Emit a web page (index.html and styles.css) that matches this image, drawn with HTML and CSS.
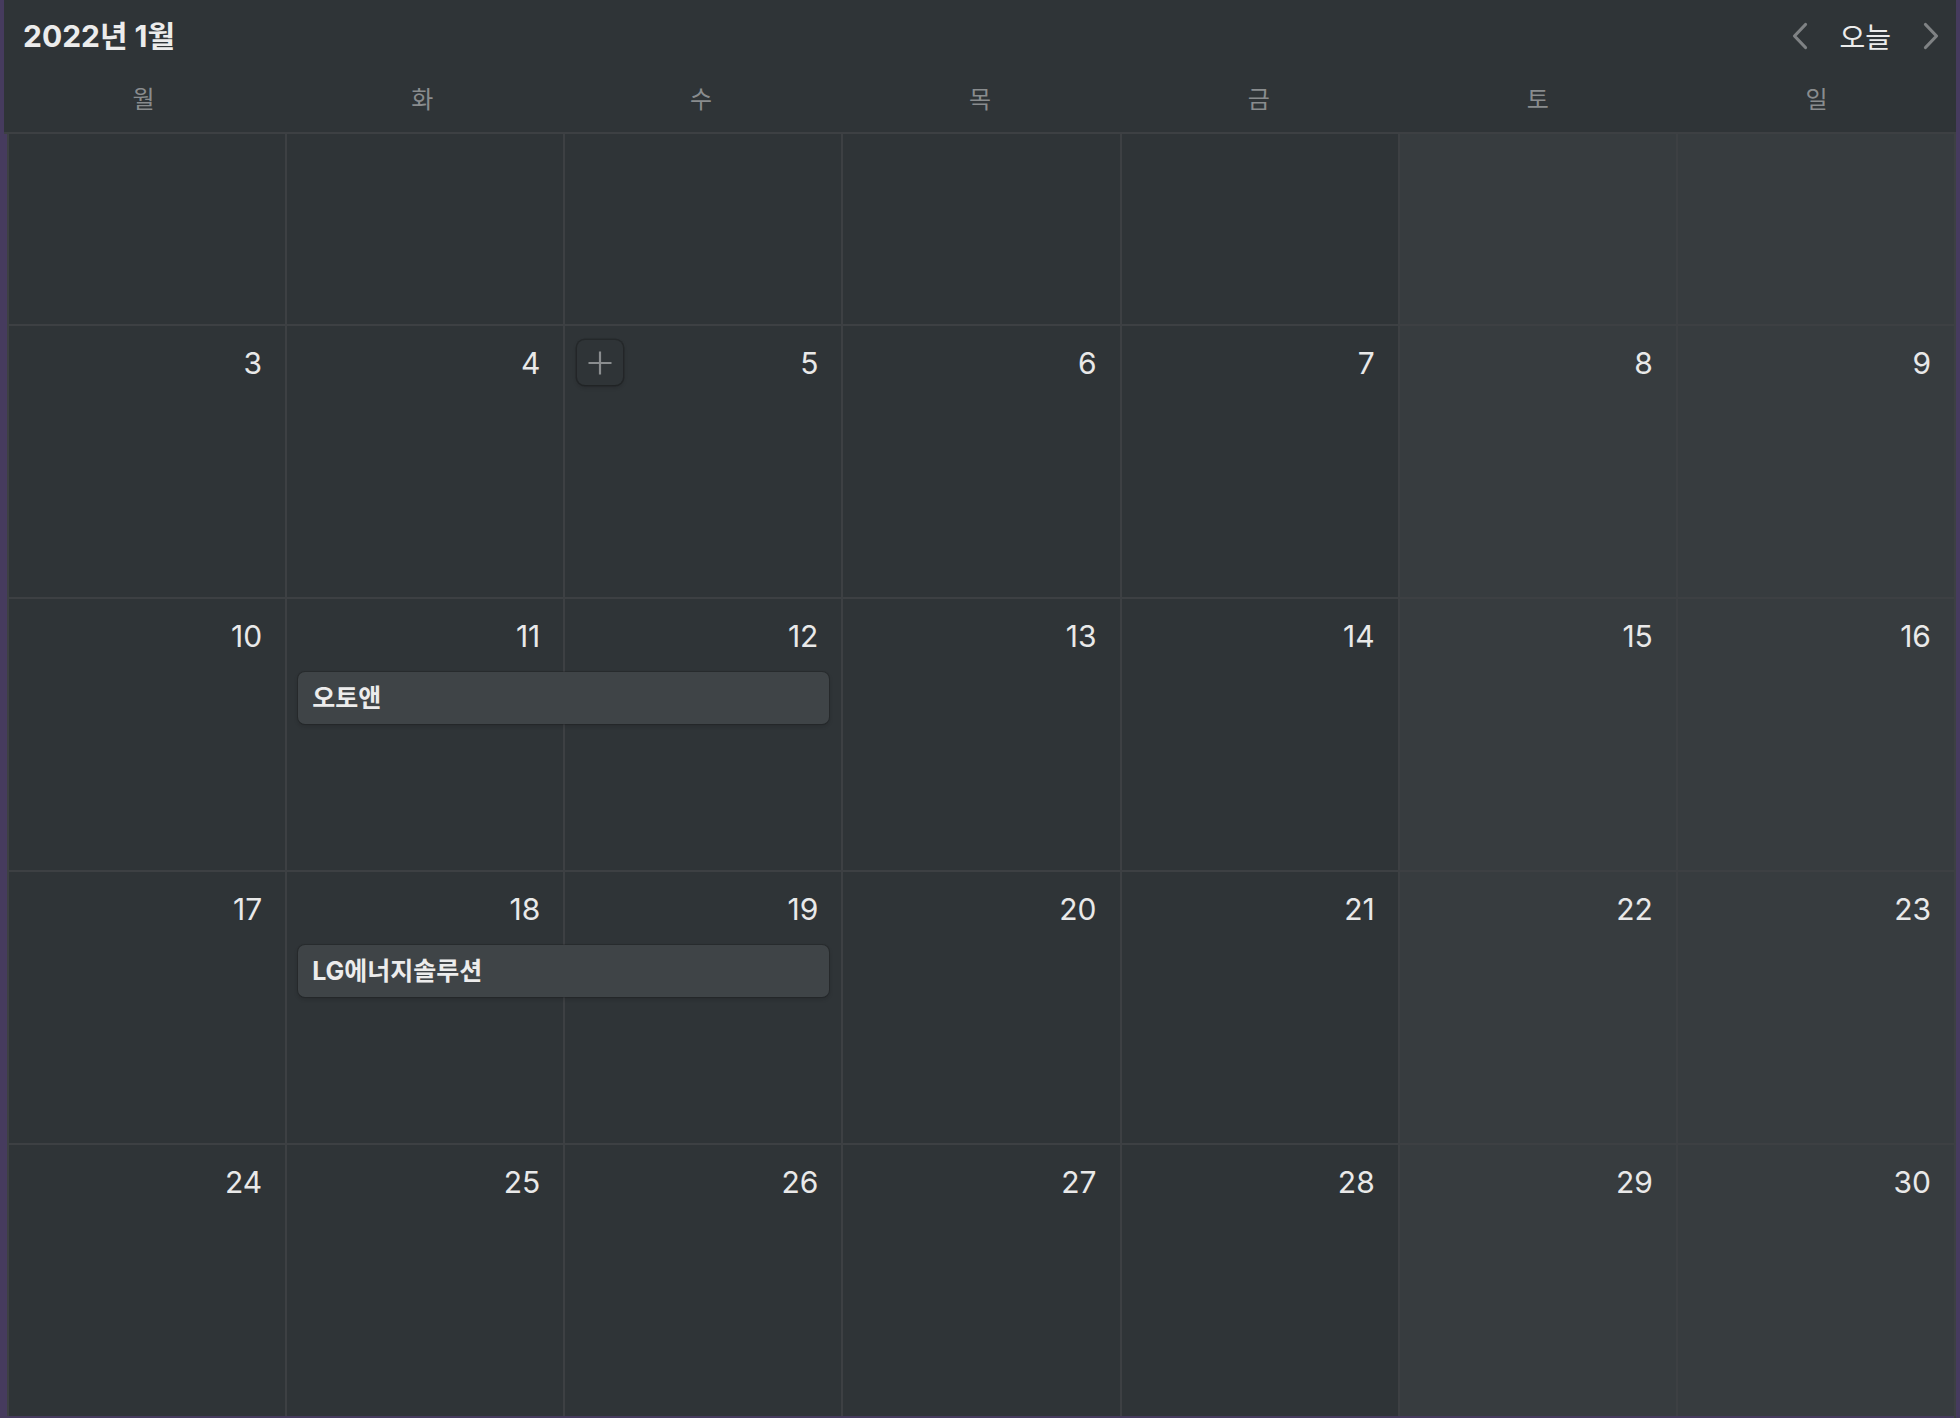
FILE: index.html
```html
<!DOCTYPE html>
<html lang="ko">
<head>
<meta charset="utf-8">
<title>2022년 1월</title>
<link rel="stylesheet" href="styles.css">
</head>
<body>
<div class="app">
  <header class="header">
    <div class="topbar">
      <h1 class="title">2022년 1월</h1>
      <nav class="nav">
        <button class="arrow" aria-label="이전">
          <svg width="16" height="28" viewBox="0 0 16 28"><polyline points="13.5,2.5 2.5,14 13.5,25.5" fill="none" stroke="currentColor" stroke-width="3.2" stroke-linecap="round" stroke-linejoin="round"/></svg>
        </button>
        <span class="today">오늘</span>
        <button class="arrow" aria-label="다음">
          <svg width="16" height="28" viewBox="0 0 16 28"><polyline points="2.5,2.5 13.5,14 2.5,25.5" fill="none" stroke="currentColor" stroke-width="3.2" stroke-linecap="round" stroke-linejoin="round"/></svg>
        </button>
      </nav>
    </div>
    <div class="weekdays">
      <div class="wd">월</div><div class="wd">화</div><div class="wd">수</div><div class="wd">목</div><div class="wd">금</div><div class="wd">토</div><div class="wd">일</div>
    </div>
  </header>

  <main class="month">
    <div class="week week-first">
      <div class="cell"></div><div class="cell"></div><div class="cell"></div><div class="cell"></div><div class="cell"></div><div class="cell"></div><div class="cell"></div>
    </div>
    <div class="week">
      <div class="cell"><span class="num">3</span></div>
      <div class="cell"><span class="num">4</span></div>
      <div class="cell"><button class="add" aria-label="추가"><svg width="26" height="26" viewBox="0 0 26 26"><path d="M13 1.5v23M1.5 13h23" stroke="currentColor" stroke-width="2.2" fill="none"/></svg></button><span class="num">5</span></div>
      <div class="cell"><span class="num">6</span></div>
      <div class="cell"><span class="num">7</span></div>
      <div class="cell"><span class="num">8</span></div>
      <div class="cell"><span class="num">9</span></div>
    </div>
    <div class="week">
      <div class="cell"><span class="num">10</span></div>
      <div class="cell"><span class="num">11</span></div>
      <div class="cell"><span class="num">12</span></div>
      <div class="cell"><span class="num">13</span></div>
      <div class="cell"><span class="num">14</span></div>
      <div class="cell"><span class="num">15</span></div>
      <div class="cell"><span class="num">16</span></div>
      <div class="event span-2-3">오토앤</div>
    </div>
    <div class="week">
      <div class="cell"><span class="num">17</span></div>
      <div class="cell"><span class="num">18</span></div>
      <div class="cell"><span class="num">19</span></div>
      <div class="cell"><span class="num">20</span></div>
      <div class="cell"><span class="num">21</span></div>
      <div class="cell"><span class="num">22</span></div>
      <div class="cell"><span class="num">23</span></div>
      <div class="event span-2-3">LG에너지솔루션</div>
    </div>
    <div class="week">
      <div class="cell"><span class="num">24</span></div>
      <div class="cell"><span class="num">25</span></div>
      <div class="cell"><span class="num">26</span></div>
      <div class="cell"><span class="num">27</span></div>
      <div class="cell"><span class="num">28</span></div>
      <div class="cell"><span class="num">29</span></div>
      <div class="cell"><span class="num">30</span></div>
    </div>
  </main>
</div>
</body>
</html>
```

FILE: styles.css
```css
html, body {
  margin: 0;
  height: 100%;
}
body {
  background: #463b5e;
  overflow: hidden;
  font-family: Inter, "Noto Sans CJK KR", sans-serif;
  color: #ebebeb;
}
.app {
  height: 1418px;
  display: flex;
  flex-direction: column;
  overflow: hidden;
}
.header {
  margin: 0 4px;
  background: #2f3437;
}
.topbar {
  height: 66px;
  box-sizing: border-box;
  padding: 5px 17px 0 19px;
  display: flex;
  align-items: center;
  justify-content: space-between;
}
.title {
  margin: 0;
  font-size: 30px;
  font-weight: 700;
  line-height: 36px;
  color: #ececec;
}
.nav {
  display: flex;
  align-items: center;
}
.arrow {
  background: none;
  border: 0;
  padding: 0;
  width: 16px;
  height: 28px;
  display: flex;
  color: #7f8284;
}
.today {
  font-family: "Noto Sans CJK KR", sans-serif;
  font-size: 28px;
  line-height: 36px;
  margin: 0 32px 0 31px;
  color: #ececec;
}
.weekdays {
  display: grid;
  grid-template-columns: repeat(7, 1fr);
  height: 68px;
  box-sizing: border-box;
  padding: 0 0 4px 0;
  border-bottom: 2px solid #3d4043;
}
.wd {
  text-align: center;
  font-family: "Noto Sans CJK KR", sans-serif;
  font-size: 24px;
  line-height: 64px;
  color: #898c8e;
}
.month {
  margin: 0 4px 0 7px;
  border-right: 2px solid #3d4043;
  flex: 1;
}
.week {
  display: grid;
  grid-template-columns: repeat(7, 1fr);
  height: 273px;
  box-sizing: border-box;
  border-top: 2px solid #3d4043;
}
.week-first {
  height: 190px;
  border-top: 0;
}
.cell {
  grid-row: 1;
  border-left: 2px solid #3d4043;
  background: #2f3437;
  display: flex;
  align-items: flex-start;
  padding: 14px 23px 0 12px;
  min-width: 0;
}
.cell:nth-child(1) { grid-column: 1; }
.cell:nth-child(2) { grid-column: 2; }
.cell:nth-child(3) { grid-column: 3; }
.cell:nth-child(4) { grid-column: 4; }
.cell:nth-child(5) { grid-column: 5; }
.cell:nth-child(6) { grid-column: 6; background: #373c3f; }
.cell:nth-child(7) { grid-column: 7; background: #373c3f; }
.num {
  margin-left: auto;
  margin-top: 5px;
  font-size: 30px;
  line-height: 36px;
  color: #e9e9e9;
}
.add {
  width: 46px;
  height: 45px;
  padding: 0;
  border: 0;
  border-radius: 8px;
  background: #2f3437;
  box-shadow: 0 0 0 1.5px rgba(15, 15, 15, 0.28), 0 2px 4px rgba(15, 15, 15, 0.25);
  display: flex;
  align-items: center;
  justify-content: center;
  color: #8a8d8f;
}
.event {
  grid-row: 1;
  align-self: start;
  margin: 73px 12px 0 13px;
  height: 52px;
  box-sizing: border-box;
  padding-left: 14px;
  border-radius: 7px;
  background: #3f4447;
  box-shadow: 0 0 0 1px rgba(15, 15, 15, 0.2), 0 2px 4px rgba(15, 15, 15, 0.2);
  font-size: 25px;
  font-weight: 700;
  line-height: 52px;
  color: #ececec;
  white-space: nowrap;
  overflow: hidden;
  z-index: 1;
}
.span-2-3 {
  grid-column: 2 / 4;
}
```
